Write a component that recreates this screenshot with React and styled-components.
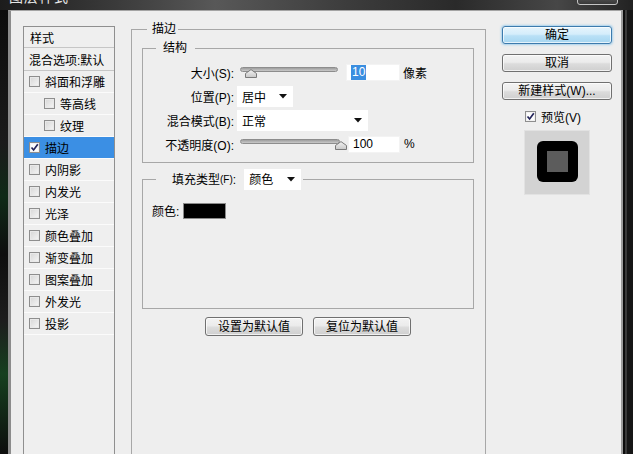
import React from "react";
import styled, { createGlobalStyle } from "styled-components";

const Global = createGlobalStyle`
  html, body { margin: 0; padding: 0; background: #111; }
  body {
    font-family: "Liberation Sans", "Noto Sans CJK SC", sans-serif;
    font-size: 12px;
    color: #000;
  }
  * { box-sizing: border-box; }
`;

const Screen = styled.div`
  width: 633px;
  height: 454px;
  overflow: hidden;
  display: flex;
  flex-direction: column;
  background: #141414;
`;

const TitleBar = styled.div`
  height: 10px;
  flex: none;
  display: flex;
  justify-content: space-between;
  align-items: flex-start;
  overflow: hidden;
  background: linear-gradient(90deg, #1c1c1c 0%, #3a3a3a 18%, #585858 34%, #3c3c3c 55%, #2a2a2a 72%, #474747 88%, #222 100%);
`;

const TitleText = styled.span`
  margin: -11px 0 0 9px;
  color: #e6e6e6;
  font-size: 14px;
  line-height: 16px;
  letter-spacing: 1px;
`;

const CloseBox = styled.span`
  width: 41px;
  height: 14px;
  margin: -9px 15px 0 0;
  border: 1px solid #c4c4c4;
  border-radius: 3px;
  background: linear-gradient(#6a6a6a, #383838);
`;

const Body = styled.div`
  flex: 1;
  display: flex;
  min-height: 0;
`;

const LeftEdge = styled.div`
  width: 8px;
  flex: none;
  background: linear-gradient(180deg, #0c0c0c 0%, #1b1b1b 30%, #0f2a17 42%, #0e0e0e 55%, #1d1d1d 70%, #16401f 82%, #0d0d0d 100%);
`;

const RightEdge = styled.div`
  width: 10px;
  flex: none;
  background: linear-gradient(90deg, #0d0d0d 0 2px, #3a3a3a 2px 4px, #161616 4px);
`;

const Dialog = styled.div`
  flex: 1;
  display: flex;
  align-items: flex-start;
  overflow: hidden;
  background: #eeeeee;
  border-top: 1px solid #a4a4a4;
  border-left: 3px solid #8c8c8c;
  border-right: 2px solid #9c9c9c;
  padding: 10px 0 0 12px;
`;

/* ---------- left style list ---------- */

const StyleList = styled.div`
  width: 92px;
  height: 440px;
  flex: none;
  margin: 5px 16px 0 0;
  border: 1px solid #8f8f8f;
  background: #efefef;
  display: flex;
  flex-direction: column;
`;

const ListRow = styled.div`
  height: ${(p) => p.$h || 22}px;
  flex: none;
  display: flex;
  align-items: center;
  gap: 5px;
  padding-left: ${(p) => p.$pad}px;
  border-bottom: 1px solid ${(p) => (p.$strong ? "#c6c6c6" : "#fbfbfb")};
  background: ${(p) => (p.$selected ? "#3b8fe4" : "transparent")};
  white-space: nowrap;
  overflow: hidden;
  font-size: 12px;
`;

const Box = styled.span`
  width: 11px;
  height: 11px;
  flex: none;
  display: inline-flex;
  align-items: center;
  justify-content: center;
  border: 1px solid #8e8e8e;
  background: ${(p) =>
    p.$checked ? "#fdfdfd" : "linear-gradient(135deg, #d6d6d6, #f6f6f6)"};
  box-shadow: inset 0 0 0 1px ${(p) => (p.$checked ? "#f2f2f2" : "#e9e9e9")};
`;

const Check = ({ checked }) => (
  <Box $checked={checked}>
    {checked && (
      <svg width="9" height="9" viewBox="0 0 9 9">
        <path d="M1.5 4.5 L3.6 7 L7.8 1.3" fill="none" stroke="#23245a" strokeWidth="1.7" />
      </svg>
    )}
  </Box>
);

/* ---------- groups ---------- */

const Group = styled.fieldset`
  margin: 0;
  min-width: 0;
  border: 1px solid #a7a7a7;
`;

const MainGroup = styled(Group)`
  width: 355px;
  height: 470px;
  flex: none;
  padding: 0 11px 0 10px;
`;

const StructGroup = styled(Group)`
  margin-top: 3px;
  padding: 4px 0 6px 0;
`;

const FillGroup = styled(Group)`
  margin-top: 6px;
  padding: 12px 0 0 9px;
`;

const Legend = styled.legend`
  margin-left: ${(p) => p.$offset}px;
  padding: ${(p) => p.$pad};
  line-height: 16px;
  font-size: 12px;
  display: flex;
  align-items: center;
`;

const FormGrid = styled.div`
  display: grid;
  grid-template-columns: 91px 1fr;
  grid-auto-rows: 24px;
  column-gap: 3px;
  align-items: center;
`;

const Label = styled.span`
  text-align: right;
  white-space: nowrap;
`;

const Cell = styled.div`
  display: flex;
  align-items: center;
  height: 100%;
`;

const Slider = styled.div`
  position: relative;
  width: ${(p) => p.$w}px;
  height: 100%;
  margin: 0 ${(p) => p.$gap}px 0 3px;
  flex: none;
`;

const Track = styled.div`
  margin-top: 7px;
  height: 5px;
  border-radius: 3px;
  border: 1px solid #8d8d8d;
  background: linear-gradient(#9d9d9d, #c9c9c9);
`;

const ThumbSvg = styled.svg`
  position: absolute;
  top: 9px;
  left: ${(p) => p.$left}px;
`;

const Thumb = ({ left }) => (
  <ThumbSvg $left={left} width="12" height="9" viewBox="0 0 12 9">
    <defs>
      <linearGradient id="tg" x1="0" y1="0" x2="0" y2="1">
        <stop offset="0" stopColor="#f4f4f4" />
        <stop offset="1" stopColor="#c8c8c8" />
      </linearGradient>
    </defs>
    <path d="M0.5 8.5 V4.5 L6 0.6 L11.5 4.5 V8.5 Z" fill="url(#tg)" stroke="#7a7a7a" />
  </ThumbSvg>
);

const NumberBox = styled.div`
  width: ${(p) => p.$w}px;
  height: 17px;
  flex: none;
  background: #fff;
  border: 1px solid #f3f3f3;
  padding-left: 4px;
  display: flex;
  align-items: center;
  font-size: 12px;
`;

const Selected = styled.span`
  background: #3a8ee0;
  color: #fff;
  padding: 0 1px;
  line-height: 15px;
`;

const Unit = styled.span`
  margin-left: ${(p) => p.$gap}px;
`;

const SelectBox = styled.div`
  width: ${(p) => p.$w}px;
  height: 21px;
  flex: none;
  background: #fff;
  display: flex;
  align-items: center;
  justify-content: space-between;
  padding: 0 6px 0 5px;
  margin-left: ${(p) => p.$ml || 0}px;
`;

const Arrow = () => (
  <svg width="8" height="5" viewBox="0 0 8 5">
    <path d="M0 0 H8 L4 4.5 Z" fill="#111" />
  </svg>
);

const Select = ({ value, w, ml }) => (
  <SelectBox $w={w} $ml={ml}>
    <span>{value}</span>
    <Arrow />
  </SelectBox>
);

const FillBody = styled.div`
  height: 106px;
`;

const ColorRow = styled.div`
  display: flex;
  align-items: center;
  gap: 4px;
`;

const Swatch = styled.span`
  width: 43px;
  height: 16px;
  background: #000;
  border: 1px solid #8a8a8a;
`;

const Small = styled.span`
  font-size: 10px;
`;

const ButtonRow = styled.div`
  display: flex;
  justify-content: center;
  gap: 10px;
  margin-top: 8px;
`;

const Button = styled.button`
  width: ${(p) => p.$w}px;
  height: ${(p) => p.$h || 18}px;
  padding: 0;
  font: inherit;
  font-size: 12px;
  line-height: 14px;
  color: #000;
  border-radius: 3px;
  border: 1px solid ${(p) => (p.$primary ? "#3d7bad" : "#707070")};
  background: ${(p) =>
    p.$primary
      ? "linear-gradient(#e6f4fc 0%, #d4edfb 45%, #b9e0f6 55%, #a6d6f1 100%)"
      : "linear-gradient(#f3f3f3 0%, #ebebeb 45%, #dcdcdc 55%, #cfcfcf 100%)"};
  box-shadow: inset 0 0 0 1px rgba(255, 255, 255, 0.7)
    ${(p) => (p.$primary ? ", 0 0 2px 1px rgba(120, 190, 235, 0.6)" : "")};
`;

/* ---------- right column ---------- */

const SideColumn = styled.div`
  width: 110px;
  flex: none;
  margin: 5px 0 0 16px;
  display: flex;
  flex-direction: column;
  align-items: center;
  gap: 10px;
`;

const PreviewToggle = styled.label`
  display: flex;
  align-items: center;
  gap: 5px;
  height: 14px;
  margin: -1px 0 0 -8px;
`;

const PreviewBox = styled.div`
  width: 66px;
  height: 65px;
  margin-top: -3px;
  background: #d3d3d3;
  border: 1px solid #e2e2e2;
  display: flex;
  align-items: center;
  justify-content: center;
  padding-bottom: 2px;
`;

const PreviewOuter = styled.div`
  width: 41px;
  height: 41px;
  border-radius: 6px;
  background: #000;
  display: flex;
  align-items: center;
  justify-content: center;
`;

const PreviewInner = styled.div`
  width: 21px;
  height: 21px;
  background: #5c5c5c;
`;

const layers = [
  { label: "斜面和浮雕" },
  { label: "等高线", indent: true },
  { label: "纹理", indent: true },
  { label: "描边", checked: true, selected: true },
  { label: "内阴影" },
  { label: "内发光" },
  { label: "光泽" },
  { label: "颜色叠加" },
  { label: "渐变叠加" },
  { label: "图案叠加" },
  { label: "外发光" },
  { label: "投影" },
];

export default function App() {
  return (
    <>
      <Global />
      <Screen>
        <TitleBar>
          <TitleText>图层样式</TitleText>
          <CloseBox />
        </TitleBar>
        <Body>
          <LeftEdge />
          <Dialog>
            <StyleList>
              <ListRow $h={21} $pad={6} $strong>样式</ListRow>
              <ListRow $h={23} $pad={5} $strong>混合选项:默认</ListRow>
              {layers.map((l) => (
                <ListRow key={l.label} $pad={l.indent ? 20 : 5} $selected={l.selected}>
                  <Check checked={l.checked} />
                  {l.label}
                </ListRow>
              ))}
            </StyleList>

            <MainGroup>
              <Legend $offset={5} $pad="0 2px 0 5px">描边</Legend>
              <StructGroup>
                <Legend $offset={13} $pad="0 8px 0 7px">结构</Legend>
                <FormGrid>
                  <Label>大小(S):</Label>
                  <Cell>
                    <Slider $w={98} $gap={8}>
                      <Track />
                      <Thumb left={5} />
                    </Slider>
                    <NumberBox $w={54}>
                      <Selected>10</Selected>
                    </NumberBox>
                    <Unit $gap={3}>像素</Unit>
                  </Cell>

                  <Label>位置(P):</Label>
                  <Cell>
                    <Select value="居中" w={56} />
                  </Cell>

                  <Label>混合模式(B):</Label>
                  <Cell>
                    <Select value="正常" w={131} />
                  </Cell>

                  <Label>不透明度(O):</Label>
                  <Cell>
                    <Slider $w={100} $gap={8}>
                      <Track />
                      <Thumb left={95} />
                    </Slider>
                    <NumberBox $w={52}>100</NumberBox>
                    <Unit $gap={4}>%</Unit>
                  </Cell>
                </FormGrid>
              </StructGroup>

              <FillGroup>
                <Legend $offset={4} $pad="0 2px 0 16px">
                  填充类型<Small>(F)</Small>:
                  <Select value="颜色" w={57} ml={8} />
                </Legend>
                <FillBody>
                  <ColorRow>
                    颜色:
                    <Swatch />
                  </ColorRow>
                </FillBody>
              </FillGroup>

              <ButtonRow>
                <Button $w={98} $h={19}>设置为默认值</Button>
                <Button $w={98} $h={19}>复位为默认值</Button>
              </ButtonRow>
            </MainGroup>

            <SideColumn>
              <Button $w={110} $primary>确定</Button>
              <Button $w={110}>取消</Button>
              <Button $w={110}>新建样式(W)...</Button>
              <PreviewToggle>
                <Check checked />
                预览(V)
              </PreviewToggle>
              <PreviewBox>
                <PreviewOuter>
                  <PreviewInner />
                </PreviewOuter>
              </PreviewBox>
            </SideColumn>
          </Dialog>
          <RightEdge />
        </Body>
      </Screen>
    </>
  );
}
